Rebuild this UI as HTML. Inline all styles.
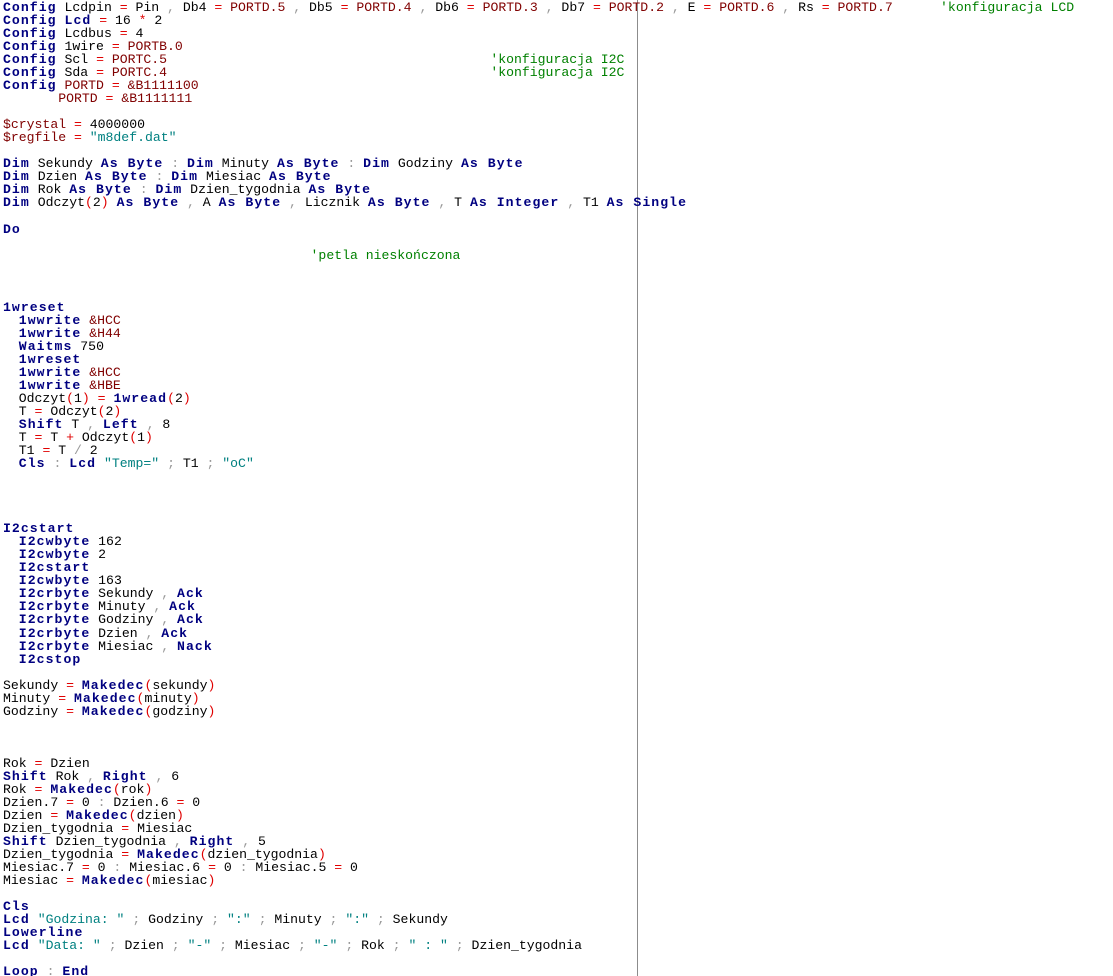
<!DOCTYPE html>
<html><head><meta charset="utf-8"><style>
html,body{margin:0;padding:0;background:#fff;width:1113px;height:976px;overflow:hidden;position:relative}
pre{margin:0;position:absolute;left:3px;top:1px;font-family:"Liberation Mono",monospace;font-size:13.15px;line-height:13.03px;color:#000}
.k{color:#000080;font-weight:bold;letter-spacing:1.05px}
.o{color:#e00000}
.p{color:#999}
.c{color:#800000}
.s{color:#008080}
.m{color:#008000}
#vl{position:absolute;left:637px;top:0;width:1px;height:976px;background:#8c8c8c}
</style></head><body>
<div id="vl"></div>
<pre><span class="k">Config</span> Lcdpin <span class="o">=</span> Pin <span class="p">,</span> Db4 <span class="o">=</span> <span class="c">PORTD.5</span> <span class="p">,</span> Db5 <span class="o">=</span> <span class="c">PORTD.4</span> <span class="p">,</span> Db6 <span class="o">=</span> <span class="c">PORTD.3</span> <span class="p">,</span> Db7 <span class="o">=</span> <span class="c">PORTD.2</span> <span class="p">,</span> E <span class="o">=</span> <span class="c">PORTD.6</span> <span class="p">,</span> Rs <span class="o">=</span> <span class="c">PORTD.7</span>      <span class="m">'konfiguracja LCD</span>
<span class="k">Config</span> <span class="k">Lcd</span> <span class="o">=</span> 16 <span class="o">*</span> 2
<span class="k">Config</span> Lcdbus <span class="o">=</span> 4
<span class="k">Config</span> 1wire <span class="o">=</span> <span class="c">PORTB.0</span>
<span class="k">Config</span> Scl <span class="o">=</span> <span class="c">PORTC.5</span>                                         <span class="m">'konfiguracja I2C</span>
<span class="k">Config</span> Sda <span class="o">=</span> <span class="c">PORTC.4</span>                                         <span class="m">'konfiguracja I2C</span>
<span class="k">Config</span> <span class="c">PORTD</span> <span class="o">=</span> <span class="c">&amp;B1111100</span>
       <span class="c">PORTD</span> <span class="o">=</span> <span class="c">&amp;B1111111</span>

<span class="c">$crystal</span> <span class="o">=</span> 4000000
<span class="c">$regfile</span> <span class="o">=</span> <span class="s">"m8def.dat"</span>

<span class="k">Dim</span> Sekundy <span class="k">As Byte</span> <span class="p">:</span> <span class="k">Dim</span> Minuty <span class="k">As Byte</span> <span class="p">:</span> <span class="k">Dim</span> Godziny <span class="k">As Byte</span>
<span class="k">Dim</span> Dzien <span class="k">As Byte</span> <span class="p">:</span> <span class="k">Dim</span> Miesiac <span class="k">As Byte</span>
<span class="k">Dim</span> Rok <span class="k">As Byte</span> <span class="p">:</span> <span class="k">Dim</span> Dzien_tygodnia <span class="k">As Byte</span>
<span class="k">Dim</span> Odczyt<span class="o">(</span>2<span class="o">)</span> <span class="k">As Byte</span> <span class="p">,</span> A <span class="k">As Byte</span> <span class="p">,</span> Licznik <span class="k">As Byte</span> <span class="p">,</span> T <span class="k">As Integer</span> <span class="p">,</span> T1 <span class="k">As Single</span>

<span class="k">Do</span>

                                       <span class="m">'petla nieskończona</span>



<span class="k">1wreset</span>
  <span class="k">1wwrite</span> <span class="c">&amp;HCC</span>
  <span class="k">1wwrite</span> <span class="c">&amp;H44</span>
  <span class="k">Waitms</span> 750
  <span class="k">1wreset</span>
  <span class="k">1wwrite</span> <span class="c">&amp;HCC</span>
  <span class="k">1wwrite</span> <span class="c">&amp;HBE</span>
  Odczyt<span class="o">(</span>1<span class="o">)</span> <span class="o">=</span> <span class="k">1wread</span><span class="o">(</span>2<span class="o">)</span>
  T <span class="o">=</span> Odczyt<span class="o">(</span>2<span class="o">)</span>
  <span class="k">Shift</span> T <span class="p">,</span> <span class="k">Left</span> <span class="p">,</span> 8
  T <span class="o">=</span> T <span class="o">+</span> Odczyt<span class="o">(</span>1<span class="o">)</span>
  T1 <span class="o">=</span> T <span class="p">/</span> 2
  <span class="k">Cls</span> <span class="p">:</span> <span class="k">Lcd</span> <span class="s">"Temp="</span> <span class="p">;</span> T1 <span class="p">;</span> <span class="s">"oC"</span>




<span class="k">I2cstart</span>
  <span class="k">I2cwbyte</span> 162
  <span class="k">I2cwbyte</span> 2
  <span class="k">I2cstart</span>
  <span class="k">I2cwbyte</span> 163
  <span class="k">I2crbyte</span> Sekundy <span class="p">,</span> <span class="k">Ack</span>
  <span class="k">I2crbyte</span> Minuty <span class="p">,</span> <span class="k">Ack</span>
  <span class="k">I2crbyte</span> Godziny <span class="p">,</span> <span class="k">Ack</span>
  <span class="k">I2crbyte</span> Dzien <span class="p">,</span> <span class="k">Ack</span>
  <span class="k">I2crbyte</span> Miesiac <span class="p">,</span> <span class="k">Nack</span>
  <span class="k">I2cstop</span>

Sekundy <span class="o">=</span> <span class="k">Makedec</span><span class="o">(</span>sekundy<span class="o">)</span>
Minuty <span class="o">=</span> <span class="k">Makedec</span><span class="o">(</span>minuty<span class="o">)</span>
Godziny <span class="o">=</span> <span class="k">Makedec</span><span class="o">(</span>godziny<span class="o">)</span>



Rok <span class="o">=</span> Dzien
<span class="k">Shift</span> Rok <span class="p">,</span> <span class="k">Right</span> <span class="p">,</span> 6
Rok <span class="o">=</span> <span class="k">Makedec</span><span class="o">(</span>rok<span class="o">)</span>
Dzien.7 <span class="o">=</span> 0 <span class="p">:</span> Dzien.6 <span class="o">=</span> 0
Dzien <span class="o">=</span> <span class="k">Makedec</span><span class="o">(</span>dzien<span class="o">)</span>
Dzien_tygodnia <span class="o">=</span> Miesiac
<span class="k">Shift</span> Dzien_tygodnia <span class="p">,</span> <span class="k">Right</span> <span class="p">,</span> 5
Dzien_tygodnia <span class="o">=</span> <span class="k">Makedec</span><span class="o">(</span>dzien_tygodnia<span class="o">)</span>
Miesiac.7 <span class="o">=</span> 0 <span class="p">:</span> Miesiac.6 <span class="o">=</span> 0 <span class="p">:</span> Miesiac.5 <span class="o">=</span> 0
Miesiac <span class="o">=</span> <span class="k">Makedec</span><span class="o">(</span>miesiac<span class="o">)</span>

<span class="k">Cls</span>
<span class="k">Lcd</span> <span class="s">"Godzina: "</span> <span class="p">;</span> Godziny <span class="p">;</span> <span class="s">":"</span> <span class="p">;</span> Minuty <span class="p">;</span> <span class="s">":"</span> <span class="p">;</span> Sekundy
<span class="k">Lowerline</span>
<span class="k">Lcd</span> <span class="s">"Data: "</span> <span class="p">;</span> Dzien <span class="p">;</span> <span class="s">"-"</span> <span class="p">;</span> Miesiac <span class="p">;</span> <span class="s">"-"</span> <span class="p">;</span> Rok <span class="p">;</span> <span class="s">" : "</span> <span class="p">;</span> Dzien_tygodnia

<span class="k">Loop</span> <span class="p">:</span> <span class="k">End</span></pre>
</body></html>
